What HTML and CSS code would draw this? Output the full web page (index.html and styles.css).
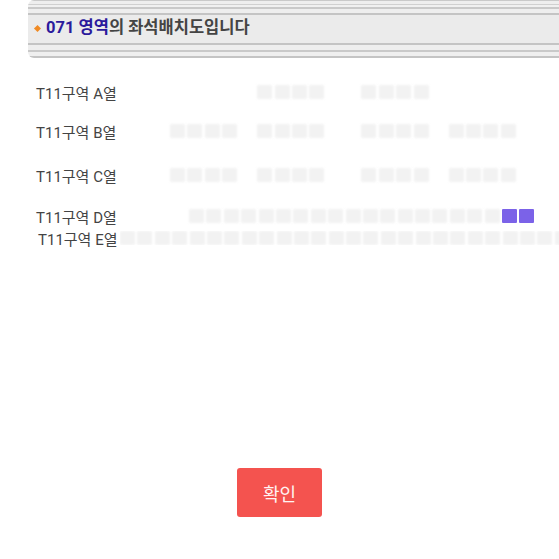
FILE: index.html
```html
<!DOCTYPE html>
<html lang="ko">
<head>
    <meta charset="UTF-8">
    <meta name="viewport" content="width=device-width, initial-scale=1.0">
    <title>좌석배치도</title>
    <link rel="stylesheet" href="styles.css">
</head>
<body>
    <div class="title-bar">
        <span class="dot"></span>
        <h1><em>071 영역</em>의 좌석배치도입니다</h1>
    </div>

    <div class="seatmap">
        <div class="row row-a">
            <span class="label">T11구역 A열</span>
            <div class="seats">
                <div class="group empty"><i></i><i></i><i></i><i></i></div>
                <div class="group"><i></i><i></i><i></i><i></i></div>
                <div class="group wide"><i></i><i></i><i></i><i></i></div>
            </div>
        </div>
        <div class="row row-b">
            <span class="label">T11구역 B열</span>
            <div class="seats">
                <div class="group"><i></i><i></i><i></i><i></i></div>
                <div class="group"><i></i><i></i><i></i><i></i></div>
                <div class="group wide"><i></i><i></i><i></i><i></i></div>
                <div class="group"><i></i><i></i><i></i><i></i></div>
            </div>
        </div>
        <div class="row row-c">
            <span class="label">T11구역 C열</span>
            <div class="seats">
                <div class="group"><i></i><i></i><i></i><i></i></div>
                <div class="group"><i></i><i></i><i></i><i></i></div>
                <div class="group wide"><i></i><i></i><i></i><i></i></div>
                <div class="group"><i></i><i></i><i></i><i></i></div>
            </div>
        </div>
        <div class="row row-d">
            <span class="label">T11구역 D열</span>
            <div class="seats">
                <div class="group">
                    <i></i><i></i><i></i><i></i><i></i><i></i><i></i><i></i><i></i>
                    <i></i><i></i><i></i><i></i><i></i><i></i><i></i><i></i><i></i>
                    <i class="picked"></i><i class="picked"></i>
                </div>
            </div>
        </div>
        <div class="row row-e">
            <span class="label">T11구역 E열</span>
            <div class="seats">
                <div class="group">
                    <i></i><i></i><i></i><i></i><i></i><i></i><i></i><i></i><i></i><i></i>
                    <i></i><i></i><i></i><i></i><i></i><i></i><i></i><i></i><i></i><i></i>
                    <i></i><i></i><i></i><i></i><i></i><i></i>
                </div>
            </div>
        </div>
    </div>

    <div class="actions">
        <button class="button">확인</button>
    </div>
</body>
</html>
```

FILE: styles.css
```css
:root {
    --text-color: #444444;
    --title-color: #2b1a9c;
    --seat-color: #f2f2f2;
    --picked-color: #7b62e8;
    --button-color: #f4534f;
}

* {
    box-sizing: border-box;
    margin: 0;
    padding: 0;
}

body {
    background: #ffffff;
    color: var(--text-color);
    font-family: Roboto, "Noto Sans CJK KR", sans-serif;
    width: 559px;
    overflow: hidden;
}

/* Title bar with the striped frame */
.title-bar {
    margin-left: 28px;
    height: 58px;
    display: flex;
    align-items: center;
    padding-left: 7px;
    padding-bottom: 2px;
    border-radius: 6px 0 0 6px;
    background: linear-gradient(to bottom,
        #c9c9c9 0, #c9c9c9 1px,
        #eeeeee 1px, #eeeeee 4px,
        #d0d0d0 4px, #d0d0d0 5px,
        #f0f0f0 5px, #f0f0f0 7px,
        #c9c9c9 7px, #c9c9c9 9px,
        #eeeeee 9px, #eeeeee 13px,
        #c4c4c4 13px, #c4c4c4 15px,
        #ebebeb 15px, #ebebeb 43px,
        #c4c4c4 43px, #c4c4c4 45px,
        #eeeeee 45px, #eeeeee 50px,
        #c9c9c9 50px, #c9c9c9 52px,
        #efefef 52px, #efefef 56px,
        #c4c4c4 56px, #c4c4c4 58px);
}

.dot {
    width: 5px;
    height: 5px;
    background: #f08a24;
    transform: rotate(45deg);
    margin-right: 6px;
}

.title-bar h1 {
    font-size: 16.5px;
    font-weight: 700;
    color: var(--text-color);
    line-height: 1;
}

.title-bar h1 em {
    font-style: normal;
    color: var(--title-color);
}

/* Seat rows */
.seatmap {
    padding-left: 36px;
}

.row {
    display: flex;
    align-items: center;
    height: 20px;
}

.row-a { margin-top: 24px; }
.row-b { margin-top: 19px; }
.row-c { margin-top: 24px; }
.row-d { margin-top: 21px; }
.row-e { margin-top: 2px; }

.label {
    flex-shrink: 0;
    width: 134px;
    font-size: 15px;
    white-space: nowrap;
}

.row-d .seats {
    padding-left: 19px;
}

.row-e .label {
    width: 82px;
    margin-left: 2px;
}

.row-e .seats {
    min-width: 0;
    overflow: hidden;
}

.seats {
    display: flex;
}

.group {
    display: flex;
    gap: 2.4px;
    margin-right: 20px;
}

.group.wide {
    margin-left: 17px;
}

.group.empty {
    visibility: hidden;
}

.group i {
    display: block;
    flex-shrink: 0;
    width: 15px;
    height: 14px;
    background: var(--seat-color);
    border-radius: 1px;
    filter: blur(1px);
}

.group i.picked {
    background: var(--picked-color);
    filter: none;
}

/* Confirm button */
.actions {
    display: flex;
    justify-content: center;
    margin-top: 220px;
}

.button {
    width: 85px;
    height: 49px;
    border: none;
    border-radius: 3px;
    background: var(--button-color);
    color: #fff3f3;
    font-family: "Noto Sans CJK KR", sans-serif;
    font-size: 18px;
    cursor: pointer;
}
```
